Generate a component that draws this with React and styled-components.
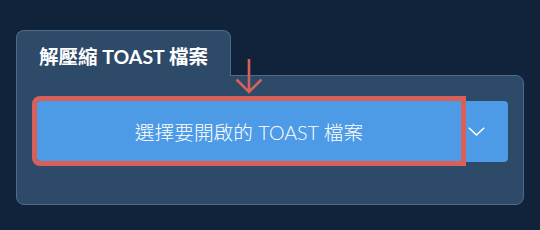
import React from "react";
import styled, { createGlobalStyle } from "styled-components";

const GlobalStyle = createGlobalStyle`
  html, body {
    margin: 0;
    padding: 0;
    background: #11233a;
  }
  body {
    font-family: Lato, "Noto Sans CJK TC", sans-serif;
    width: 540px;
    height: 230px;
    overflow: hidden;
  }
`;

const Page = styled.div`
  padding: 30px 16px 0 16px;
  position: relative;
`;

const Tab = styled.div`
  position: relative;
  z-index: 2;
  width: 215px;
  height: 46px;
  margin-bottom: -1px;
  box-sizing: border-box;
  background: #2d4a69;
  border: 1px solid #4f6a89;
  border-bottom: none;
  border-radius: 8px 8px 0 0;
  display: flex;
  align-items: center;
  justify-content: center;
  padding-top: 4px;
  color: #fff;
  font-weight: 700;
  font-size: 19.5px;
`;

const Panel = styled.div`
  position: relative;
  width: 508px;
  height: 130px;
  box-sizing: border-box;
  background: #2d4a69;
  border: 1px solid #4f6a89;
  border-radius: 0 8px 8px 8px;
  padding: 25px 15px 0 20px;
`;

const ButtonGroup = styled.div`
  display: flex;
  align-items: flex-start;
`;

const MainButton = styled.button`
  flex: 0 0 424px;
  height: 60px;
  border: none;
  border-radius: 3px 0 0 3px;
  background: #4d9be6;
  color: #fff;
  font-family: Lato, "Noto Sans CJK TC", sans-serif;
  font-weight: 300;
  font-size: 19.7px;
  outline: ${(p) => (p.$highlight ? "5px solid #d9605a" : "none")};
  position: relative;
  z-index: 1;
  padding: 0;
`;

const DropButton = styled.button`
  flex: 0 0 47px;
  height: 61px;
  border: none;
  border-radius: 0 4px 4px 0;
  background: #4d9be6;
  display: flex;
  align-items: center;
  justify-content: center;
  padding: 0 16px 0 0;
`;

const Pointer = styled.svg`
  position: absolute;
  left: 235px;
  top: 58px;
  z-index: 3;
`;

export default function App() {
  return (
    <>
      <GlobalStyle />
      <Page>
        <Tab>解壓縮 TOAST 檔案</Tab>
        <Panel>
          <ButtonGroup>
            <MainButton $highlight>選擇要開啟的 TOAST 檔案</MainButton>
            <DropButton>
              <svg width="17" height="9" viewBox="0 0 17 9">
                <path d="M0.8 0.8 L8.5 8 L16.2 0.8" fill="none" stroke="#fff" strokeWidth="1.5" />
              </svg>
            </DropButton>
          </ButtonGroup>
        </Panel>
        <Pointer width="28" height="36" viewBox="0 0 28 36">
          <path d="M14 1 V34 M1.5 21.5 L14 34 L26.5 21.5" fill="none" stroke="#d9605a" strokeWidth="2.6" />
        </Pointer>
      </Page>
    </>
  );
}
